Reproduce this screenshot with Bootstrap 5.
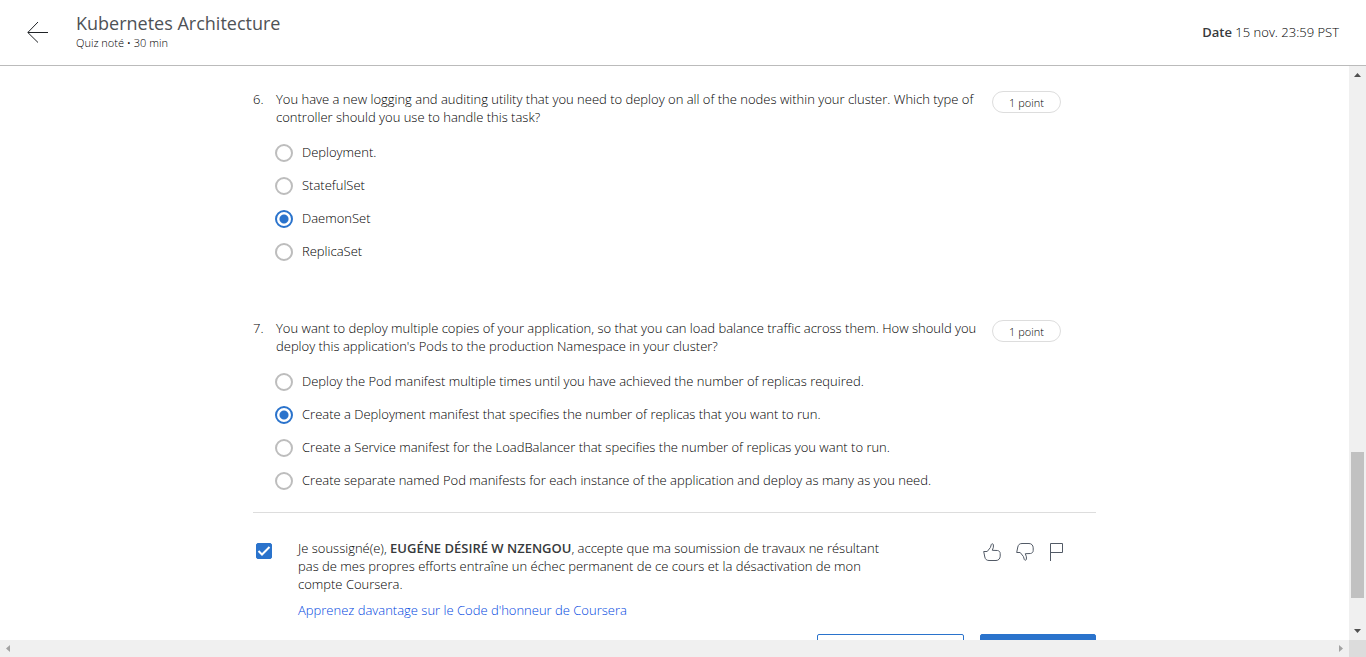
<!DOCTYPE html>
<html lang="fr">
<head>
<meta charset="utf-8">
<meta name="viewport" content="width=device-width, initial-scale=1">
<title>Kubernetes Architecture</title>
<link rel="stylesheet" href="https://cdn.jsdelivr.net/npm/bootstrap@5.3.0/dist/css/bootstrap.min.css">
<style>
  body { font-family: "Open Sans", "Noto Sans", sans-serif; font-size: 13px; line-height: 18px; font-weight: 300; color: #000; }
  strong { font-weight: 600; color: #373a3c; }
  .quiz-header { border-bottom: 1px solid #bbb; padding: 12px 27px 14px; }
  .quiz-title { font-size: 18px; line-height: 22px; margin: 0 0 1px; font-weight: 400; color: #4e5256; }
  .quiz-kind { font-size: 11px; line-height: 16px; }
  .back-link { width: 49px; color: #1f2226; }
  .quiz-body { max-width: 843px; padding-top: 24px; }
  .question { padding-right: 35px; margin-bottom: 52px; }
  .question:last-of-type { margin-bottom: 16px; }
  .question-number { width: 23px; }
  .prompt { width: 716px; margin-bottom: 9px; }
  .points { border: 1px solid #ddd; border-radius: 11px; width: 69px; height: 22px; line-height: 22px; font-size: 11px; margin-top: 1px; }
  .option { height: 33px; gap: 9px; margin-left: -1px; }
  .option .form-check-input { width: 18px; height: 18px; border: 2px solid #bdbdbd; margin: 3px 0 0; background-color: #fff; }
  .option .form-check-input:checked { border-color: #2a73cc; background-image: radial-gradient(circle, #2a73cc 4px, #fff 5px); }
  .honor { border-top: 1px solid #ddd; padding: 26px 29px 0 3px; }
  .honor .form-check-input { width: 16px; height: 16px; border-radius: 2px; margin: 4px 26px 0 0; }
  .honor .form-check-input:checked {
    background-color: #2a73cc; border-color: #2a73cc; background-size: 16px 16px;
    background-image: url("data:image/svg+xml,%3csvg xmlns='http://www.w3.org/2000/svg' viewBox='0 0 16 16'%3e%3cpath fill='none' stroke='%23fff' stroke-width='2' d='M2.500 8l3.500 3.500 7.500-7.500'/%3e%3c/svg%3e");
  }
  .honor-text { max-width: 590px; }
  .honor-link { color: #0046e0; }
  .feedback { gap: 15px; }
  .icon-btn { width: 18px; height: 20px; color: #525a66; line-height: 0; margin-top: 3px; }
  .actions { gap: 16px; margin-top: 15px; }
  .actions .btn { height: 40px; border-radius: 2px; border-color: #2a73cc; }
  .save-btn { width: 147px; }
  .submit-btn { width: 116px; background: #2a73cc; }
  .v-scroll { width: 17px; background: #f0f0f0; }
  .h-scroll { height: 17px; background: #f0f0f0; }
  .v-thumb { width: 13px; flex: 146 0 0; background: #c1c1c1; }
  .track-before { flex: 369 0 0; }
  .track-after { flex: 25 0 0; }
  .scroll-arrow { width: 17px; height: 17px; }
  .scroll-corner { width: 17px; height: 17px; background: #dcdcdc; }
</style>
</head>
<body class="vh-100 d-flex flex-column overflow-hidden bg-white">
<header class="quiz-header d-flex align-items-center flex-shrink-0">
  <a class="back-link" href="#" aria-label="Retour">
    <svg class="d-block" width="22" height="22" viewBox="0 0 22 22" fill="none" stroke="currentColor"><path d="M21 11.500H1M11 1 .8 11.500 11 21.500"/></svg>
  </a>
  <div>
    <h1 class="quiz-title">Kubernetes Architecture</h1>
    <div class="quiz-kind">Quiz noté • 30 min</div>
  </div>
  <div class="ms-auto"><strong>Date</strong> 15 nov. 23:59 PST</div>
</header>

<div class="d-flex flex-grow-1 overflow-hidden">
  <main class="flex-grow-1 overflow-hidden">
    <div class="quiz-body mx-auto">
      <section class="question d-flex align-items-start">
        <div class="question-number">6.</div>
        <div class="flex-grow-1">
          <div class="prompt" id="q6">You have a new logging and auditing utility that you need to deploy on all of the nodes within your cluster. Which type of controller should you use to handle this task?</div>
          <div role="radiogroup" aria-labelledby="q6">
            <div class="option d-flex align-items-center"><input class="form-check-input" type="radio" name="q6" id="q6a"><label for="q6a">Deployment.</label></div>
            <div class="option d-flex align-items-center"><input class="form-check-input" type="radio" name="q6" id="q6b"><label for="q6b">StatefulSet</label></div>
            <div class="option d-flex align-items-center"><input class="form-check-input" type="radio" name="q6" id="q6c" checked><label for="q6c">DaemonSet</label></div>
            <div class="option d-flex align-items-center"><input class="form-check-input" type="radio" name="q6" id="q6d"><label for="q6d">ReplicaSet</label></div>
          </div>
        </div>
        <div class="points text-center flex-shrink-0">1 point</div>
      </section>

      <section class="question d-flex align-items-start">
        <div class="question-number">7.</div>
        <div class="flex-grow-1">
          <div class="prompt" id="q7">You want to deploy multiple copies of your application, so that you can load balance traffic across them. How should you deploy this application's Pods to the production Namespace in your cluster?</div>
          <div role="radiogroup" aria-labelledby="q7">
            <div class="option d-flex align-items-center"><input class="form-check-input" type="radio" name="q7" id="q7a"><label for="q7a">Deploy the Pod manifest multiple times until you have achieved the number of replicas required.</label></div>
            <div class="option d-flex align-items-center"><input class="form-check-input" type="radio" name="q7" id="q7b" checked><label for="q7b">Create a Deployment manifest that specifies the number of replicas that you want to run.</label></div>
            <div class="option d-flex align-items-center"><input class="form-check-input" type="radio" name="q7" id="q7c"><label for="q7c">Create a Service manifest for the LoadBalancer that specifies the number of replicas you want to run.</label></div>
            <div class="option d-flex align-items-center"><input class="form-check-input" type="radio" name="q7" id="q7d"><label for="q7d">Create separate named Pod manifests for each instance of the application and deploy as many as you need.</label></div>
          </div>
        </div>
        <div class="points text-center flex-shrink-0">1 point</div>
      </section>

      <div class="honor d-flex align-items-start">
        <input class="form-check-input flex-shrink-0" type="checkbox" id="honor" checked>
        <div class="honor-text">
          <label class="d-block mb-2" for="honor">Je soussigné(e), <strong>EUGÉNE DÉSIRÉ W NZENGOU</strong>, accepte que ma soumission de travaux ne résultant pas de mes propres efforts entraîne un échec permanent de ce cours et la désactivation de mon compte Coursera.</label>
          <a class="honor-link text-decoration-none" href="#">Apprenez davantage sur le Code d'honneur de Coursera</a>
        </div>
        <div class="feedback d-flex ms-auto">
          <button class="icon-btn btn p-0 border-0" type="button" aria-label="J'aime"><svg width="18" height="20" viewBox="0 0 18 20" fill="none" stroke="currentColor"><path d="M.7 9.500h3.500l3.200-4 .9-3c.4-1 1.900-1 2.100.3v2.400L9.300 8.300l5.200.2c1.700.3 2.700 1.400 2.700 3v2.700c-.1 2.500-1.700 4.300-4.200 4.300H6c-2.500 0-3.700-1.300-4.200-3.500z"/></svg></button>
          <button class="icon-btn btn p-0 border-0" type="button" aria-label="Je n'aime pas"><svg width="18" height="20" viewBox="0 0 18 20" fill="none" stroke="currentColor"><path d="M.7 10.500h3.500l3.200 4 .9 3c.4 1 1.900 1 2.100-.3v-2.400l-1.100-3.100 5.200-.2c1.700-.3 2.700-1.400 2.700-3V5.800c-.1-2.500-1.700-4.300-4.200-4.300H6c-2.500 0-3.700 1.300-4.200 3.500z"/></svg></button>
          <button class="icon-btn btn p-0 border-0" type="button" aria-label="Signaler"><svg width="18" height="20" viewBox="0 0 18 20" fill="none" stroke="currentColor"><path d="M1.500 19V1.500h12v9h-12"/></svg></button>
        </div>
      </div>
      <div class="actions d-flex justify-content-end">
        <button class="save-btn btn" type="button" aria-label="Enregistrer"></button>
        <button class="submit-btn btn" type="button" aria-label="Envoyer"></button>
      </div>
    </div>
  </main>
  <div class="v-scroll d-flex flex-column align-items-center flex-shrink-0" aria-hidden="true">
    <svg class="scroll-arrow" viewBox="0 0 17 17"><path fill="#505050" d="M5 11h7L8.500 7z"/></svg>
    <div class="track-before"></div>
    <div class="v-thumb"></div>
    <div class="track-after"></div>
    <svg class="scroll-arrow" viewBox="0 0 17 17"><path fill="#505050" d="M5 6h7L8.500 10z"/></svg>
  </div>
</div>
<div class="h-scroll d-flex justify-content-between flex-shrink-0" aria-hidden="true">
  <svg class="scroll-arrow" viewBox="0 0 17 17"><path fill="#a3a3a3" d="M10 5v7L6 8.500z"/></svg>
  <div class="d-flex">
    <svg class="scroll-arrow" viewBox="0 0 17 17"><path fill="#a3a3a3" d="M7 5v7l4-3.500z"/></svg>
    <div class="scroll-corner"></div>
  </div>
</div>
<script src="https://cdn.jsdelivr.net/npm/bootstrap@5.3.0/dist/js/bootstrap.bundle.min.js"></script>
</body>
</html>
